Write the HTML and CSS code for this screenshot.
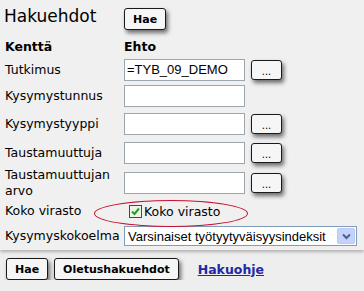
FILE: index.html
```
<!DOCTYPE html>
<html lang="fi">
  <head>
    <meta charset="UTF-8" />
    <title>Hakuehdot</title>
    <link rel="stylesheet" href="styles.css">
  </head>
  <body>
    <div class="panel">
      <div class="head">
        <h1>Hakuehdot</h1>
        <button class="btn">Hae</button>
      </div>
      <div class="form">
        <div class="th">Kenttä</div>
        <div class="th">Ehto</div>
        <div></div>

        <div class="label">Tutkimus</div>
        <div><input class="field" type="text" value="=TYB_09_DEMO" /></div>
        <div><button class="btn dots">...</button></div>

        <div class="label">Kysymystunnus</div>
        <div><input class="field" type="text" /></div>
        <div></div>

        <div class="label">Kysymystyyppi</div>
        <div><input class="field" type="text" /></div>
        <div><button class="btn dots">...</button></div>

        <div class="label">Taustamuuttuja</div>
        <div><input class="field" type="text" /></div>
        <div><button class="btn dots">...</button></div>

        <div class="label">Taustamuuttujan<br />arvo</div>
        <div><input class="field" type="text" /></div>
        <div><button class="btn dots">...</button></div>

        <div class="label">Koko virasto</div>
        <div class="check-cell">
          <span class="check">
            <svg width="9" height="9" viewBox="0 0 9 9"><path d="M1 4.5 L3.5 7 L8 1.5" fill="none" stroke="#21a121" stroke-width="2"/></svg>
          </span>
          <span>Koko virasto</span>
        </div>
        <div></div>

        <div class="label">Kysymyskokoelma</div>
        <div class="select-cell">
          <div class="select">
            <span class="select-text">Varsinaiset työtyytyväisyysindeksit</span>
            <span class="select-arrow">
              <svg width="9" height="7" viewBox="0 0 9 7"><path d="M1 1.5 L4.5 5 L8 1.5" fill="none" stroke="#4d6185" stroke-width="2"/></svg>
            </span>
          </div>
        </div>
      </div>
      <div class="ring"></div>
    </div>
    <div class="actions">
      <button class="btn">Hae</button>
      <button class="btn">Oletushakuehdot</button>
      <a class="help" href="#">Hakuohje</a>
    </div>
  </body>
</html>
```

FILE: styles.css
```
body {
  margin: 0;
  background-color: #eeeeee;
  font-family: "DejaVu Sans", Verdana, sans-serif;
  font-size: 12.5px;
  color: #000;
}

.panel {
  position: relative;
  background-color: #f0f0f0;
  padding-bottom: 2px;
  box-shadow: 0 2px 3px rgba(0, 0, 0, 0.25);
}

.head {
  display: flex;
  align-items: flex-start;
  padding: 6px 0 5px 4px;
}

h1 {
  margin: 0;
  width: 120px;
  font-size: 17px;
  font-weight: normal;
  line-height: 20px;
}

.head .btn {
  margin-top: 2px;
}

.btn {
  height: 22px;
  padding: 0 8px;
  border: 1px solid #1a1a1a;
  border-radius: 3px;
  background-color: #f6f6f6;
  box-shadow: 2px 3px 4px rgba(0, 0, 0, 0.55);
  font-family: "DejaVu Sans", Verdana, sans-serif;
  font-size: 11px;
  font-weight: bold;
  color: #000;
}

.dots {
  display: block;
  width: 31px;
  height: 20px;
  padding: 3px 0 0;
  font-weight: normal;
  font-size: 10px;
}

.form {
  display: grid;
  grid-template-columns: 124px 127px auto;
  grid-template-rows: 22px 25px 27px 29px 29px 31px 26px 24px;
  align-items: center;
}

.th {
  font-weight: bold;
}

.form .th:first-child,
.label {
  padding-left: 5px;
}

.label {
  line-height: 16px;
}

.field {
  display: block;
  box-sizing: border-box;
  width: 121px;
  height: 22px;
  margin: 0;
  padding: 1px 2px;
  border: 1px solid #9ea6ad;
  background-color: #fff;
  font-family: "Liberation Sans", Arial, sans-serif;
  font-size: 13px;
}

.check-cell {
  display: flex;
  align-items: center;
  gap: 2px;
  padding-left: 5px;
}

.check {
  display: flex;
  align-items: center;
  justify-content: center;
  width: 11px;
  height: 11px;
  border: 1px solid #1c5180;
  background-color: #f2f2ec;
}

.select-cell {
  grid-column: 2 / span 2;
}

.select {
  display: flex;
  box-sizing: border-box;
  width: 233px;
  height: 20px;
  border: 1px solid #7f9db9;
  background-color: #fff;
  font-family: "Liberation Sans", Arial, sans-serif;
  font-size: 13px;
}

.select-text {
  flex: 1;
  padding: 2px 0 0 3px;
  white-space: nowrap;
  overflow: hidden;
}

.select-arrow {
  display: flex;
  align-items: center;
  justify-content: center;
  width: 16px;
  margin: 1px;
  border: 1px solid #b9c9ef;
  border-radius: 2px;
  background-color: #c3d3fd;
}

.ring {
  position: absolute;
  left: 94px;
  top: 200px;
  width: 152px;
  height: 25px;
  border: 1px solid #c8102e;
  border-radius: 50%;
}

.actions {
  display: flex;
  align-items: center;
  gap: 6px;
  padding: 8px 0 0 6px;
}

.help {
  margin-left: 13px;
  color: #1d2aa6;
  font-weight: bold;
  font-size: 12.5px;
}
```
